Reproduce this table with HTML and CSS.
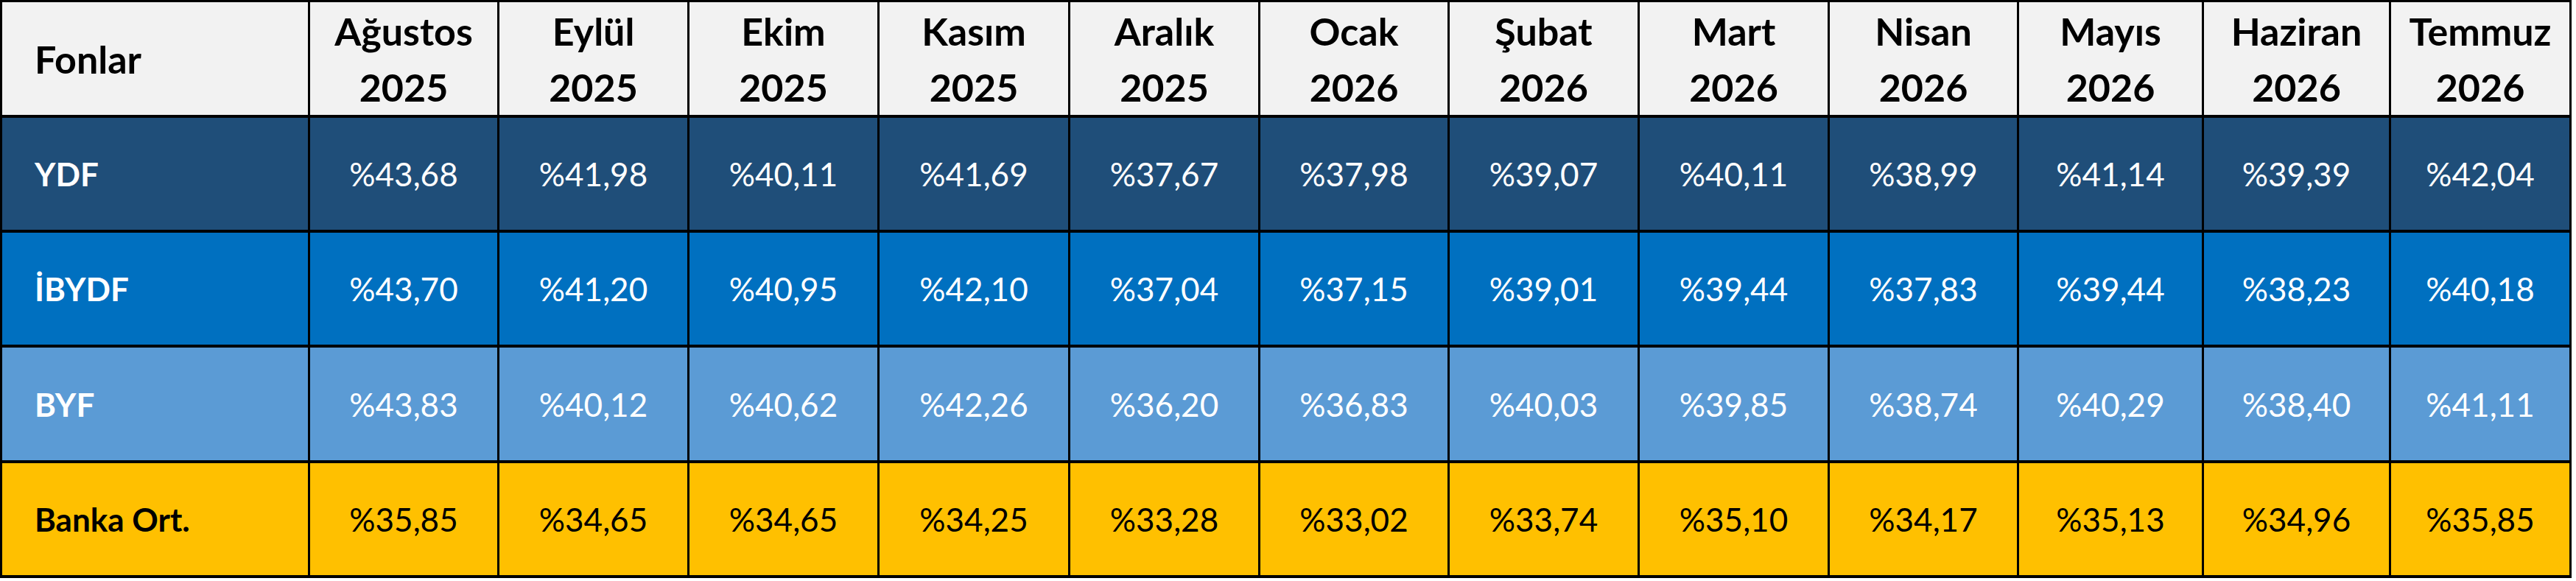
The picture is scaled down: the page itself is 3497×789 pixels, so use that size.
FILE: index.html
```html
<!DOCTYPE html>
<html lang="tr">
<head>
<meta charset="utf-8">
<title>Fon Getirileri</title>
<link rel="stylesheet" href="styles.css">
</head>
<body>
<div class="sheet">
  <div class="cell head label">Fonlar</div>
  <div class="cell head"><span>Ağustos</span><span>2025</span></div>
  <div class="cell head"><span>Eylül</span><span>2025</span></div>
  <div class="cell head"><span>Ekim</span><span>2025</span></div>
  <div class="cell head"><span>Kasım</span><span>2025</span></div>
  <div class="cell head"><span>Aralık</span><span>2025</span></div>
  <div class="cell head"><span>Ocak</span><span>2026</span></div>
  <div class="cell head"><span>Şubat</span><span>2026</span></div>
  <div class="cell head"><span>Mart</span><span>2026</span></div>
  <div class="cell head"><span>Nisan</span><span>2026</span></div>
  <div class="cell head"><span>Mayıs</span><span>2026</span></div>
  <div class="cell head"><span>Haziran</span><span>2026</span></div>
  <div class="cell head"><span>Temmuz</span><span>2026</span></div>

  <div class="cell ydf label">YDF</div>
  <div class="cell ydf">%43,68</div>
  <div class="cell ydf">%41,98</div>
  <div class="cell ydf">%40,11</div>
  <div class="cell ydf">%41,69</div>
  <div class="cell ydf">%37,67</div>
  <div class="cell ydf">%37,98</div>
  <div class="cell ydf">%39,07</div>
  <div class="cell ydf">%40,11</div>
  <div class="cell ydf">%38,99</div>
  <div class="cell ydf">%41,14</div>
  <div class="cell ydf">%39,39</div>
  <div class="cell ydf">%42,04</div>

  <div class="cell ibydf label">İBYDF</div>
  <div class="cell ibydf">%43,70</div>
  <div class="cell ibydf">%41,20</div>
  <div class="cell ibydf">%40,95</div>
  <div class="cell ibydf">%42,10</div>
  <div class="cell ibydf">%37,04</div>
  <div class="cell ibydf">%37,15</div>
  <div class="cell ibydf">%39,01</div>
  <div class="cell ibydf">%39,44</div>
  <div class="cell ibydf">%37,83</div>
  <div class="cell ibydf">%39,44</div>
  <div class="cell ibydf">%38,23</div>
  <div class="cell ibydf">%40,18</div>

  <div class="cell byf label">BYF</div>
  <div class="cell byf">%43,83</div>
  <div class="cell byf">%40,12</div>
  <div class="cell byf">%40,62</div>
  <div class="cell byf">%42,26</div>
  <div class="cell byf">%36,20</div>
  <div class="cell byf">%36,83</div>
  <div class="cell byf">%40,03</div>
  <div class="cell byf">%39,85</div>
  <div class="cell byf">%38,74</div>
  <div class="cell byf">%40,29</div>
  <div class="cell byf">%38,40</div>
  <div class="cell byf">%41,11</div>

  <div class="cell bank label">Banka Ort.</div>
  <div class="cell bank">%35,85</div>
  <div class="cell bank">%34,65</div>
  <div class="cell bank">%34,65</div>
  <div class="cell bank">%34,25</div>
  <div class="cell bank">%33,28</div>
  <div class="cell bank">%33,02</div>
  <div class="cell bank">%33,74</div>
  <div class="cell bank">%35,10</div>
  <div class="cell bank">%34,17</div>
  <div class="cell bank">%35,13</div>
  <div class="cell bank">%34,96</div>
  <div class="cell bank">%35,85</div>
</div>
</body>
</html>
```

FILE: styles.css
```css
html, body {
  margin: 0;
  padding: 0;
  background: #ffffff;
}

.sheet {
  display: grid;
  width: max-content;
  grid-template-columns: 415px 254px 255px 255px 256px 255px 254px 255px 255px 254px 248px 251px 242px;
  grid-template-rows: 153px 152px 152px 153px 152px;
  column-gap: 3px;
  row-gap: 4px;
  padding: 3px 3px 4px 3px;
  background: #000000;
  font-family: Lato, "Open Sans", sans-serif;
}

.cell {
  display: flex;
  align-items: center;
  justify-content: center;
  font-size: 44px;
  line-height: 1;
  white-space: nowrap;
  overflow: visible;
}

.cell.label {
  justify-content: flex-start;
  padding-left: 44px;
  font-weight: 700;
}

.head {
  background: #f2f2f2;
  color: #000000;
  flex-direction: column;
  font-size: 52px;
  font-weight: 700;
}

.head span {
  display: block;
  line-height: 76px;
}

.head.label {
  flex-direction: row;
}

.ydf {
  background: #1f4e79;
  color: #ffffff;
}

.ibydf {
  background: #0070c0;
  color: #ffffff;
}

.byf {
  background: #5b9bd5;
  color: #ffffff;
}

.bank {
  background: #ffc000;
  color: #000000;
}
```
